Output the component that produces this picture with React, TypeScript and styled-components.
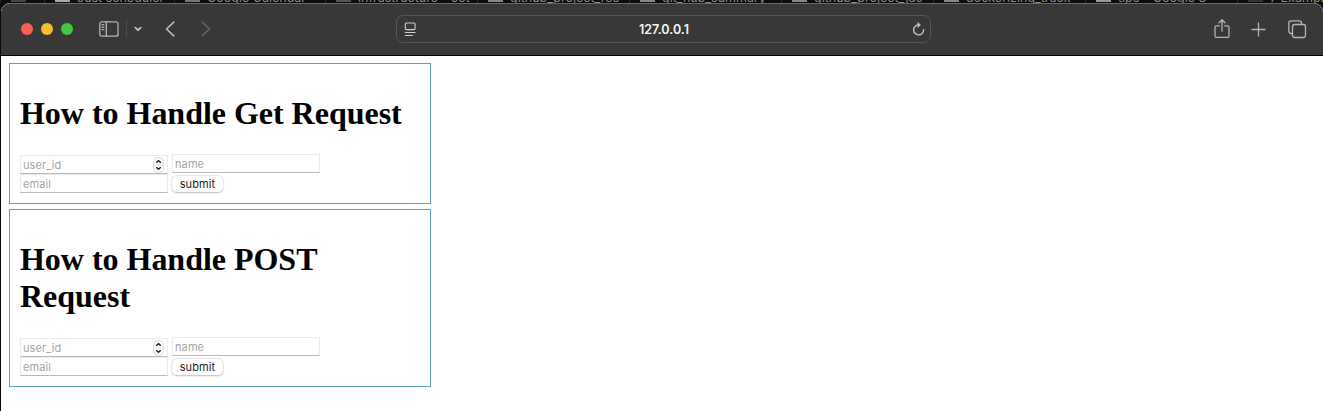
import React from 'react';
import styled, { createGlobalStyle } from 'styled-components';

const GlobalStyle = createGlobalStyle`
  * { box-sizing: border-box; }
  html, body { margin: 0; background: #fff; overflow: hidden; }
`;

const Screen = styled.div`
  width: 1323px;
  height: 411px;
  display: flex;
  flex-direction: column;
  background: #0b0b0b;
  overflow: hidden;
`;

const TabStrip = styled.div`
  height: 3px;
  flex: none;
  display: flex;
  align-items: flex-end;
  overflow: hidden;
  background: #0b0b0b;
  font: 12.5px/14px Inter, sans-serif;
  color: #8c8c8c;
  white-space: nowrap;
`;

const Tab = styled.div<{ $width: number }>`
  width: ${(p) => p.$width}px;
  height: 14px;
  flex: none;
  display: flex;
  gap: 7px;
  padding-left: 10px;
  border-left: 1px solid #2c2c2c;
`;

const TabLabel = styled.span`
  flex: none;
  margin-top: 2px;
`;

const Favicon = styled.i<{ $color: string }>`
  width: 15px;
  height: 13px;
  flex: none;
  background: ${(p) => p.$color};
`;

const Window = styled.div`
  flex: 1;
  display: flex;
  flex-direction: column;
  margin-left: 1px;
  border-radius: 9px 9px 0 0;
  overflow: hidden;
  background: #fff;
`;

const Toolbar = styled.header`
  height: 53px;
  flex: none;
  display: flex;
  align-items: center;
  padding: 0 16px 1px 20px;
  background: #383838;
  border-top: 1px solid #6a6a6a;
  border-bottom: 1px solid #000;
  border-radius: 9px 9px 0 0;
`;

const Side = styled.div<{ $end?: boolean }>`
  flex: ${(p) => (p.$end ? '1' : '0 0 375px')};
  display: flex;
  align-items: center;
  justify-content: ${(p) => (p.$end ? 'flex-end' : 'flex-start')};
`;

const Light = styled.span<{ $color: string }>`
  width: 12px;
  height: 12px;
  margin-right: 8px;
  border-radius: 50%;
  background: ${(p) => p.$color};
`;

const Glyph = styled.svg<{ $left?: number; $color?: string; $weight?: number }>`
  flex: none;
  margin-left: ${(p) => p.$left ?? 0}px;
  fill: none;
  stroke: ${(p) => p.$color ?? '#b4b4b4'};
  stroke-width: ${(p) => p.$weight ?? 1.3};
  stroke-linecap: round;
  stroke-linejoin: round;
`;

const Divider = styled.span`
  width: 1px;
  height: 18px;
  margin-left: 7px;
  background: #4b4b4b;
`;

const AddressBar = styled.div`
  width: 535px;
  height: 28px;
  flex: none;
  display: flex;
  align-items: center;
  padding: 0 5px 0 7px;
  border: 1px solid #555;
  border-radius: 7px;
`;

const Address = styled.span`
  flex: 1;
  padding-top: 1px;
  text-align: center;
  color: #f4f4f4;
  font: 600 12.5px/16px Inter, sans-serif;
`;

const Page = styled.main`
  flex: 1;
  display: flex;
  flex-direction: column;
  gap: 5px;
  padding: 7px 8px;
`;

const Card = styled.section<{ $height: number }>`
  width: 422px;
  height: ${(p) => p.$height}px;
  padding: 10px;
  border: 1px solid #5a9fc8;
`;

const Title = styled.h1`
  margin: 21px 0 22px;
  font: bold 32px/37px 'Liberation Serif', serif;
  letter-spacing: -0.02px;
  color: #000;
`;

const Form = styled.form`
  display: grid;
  grid-template-columns: 148px 148px;
  grid-template-rows: 20px 19px;
  column-gap: 4px;
  align-items: start;
`;

const Field = styled.label<{ $low?: boolean }>`
  height: 19px;
  display: flex;
  align-items: center;
  justify-content: space-between;
  margin-top: ${(p) => (p.$low ? 1 : 0)}px;
  padding: 0 3px 0 2px;
  border: 1px solid #ebebeb;
  border-bottom-color: #b9b9b9;
`;

const Input = styled.input`
  width: 100px;
  height: 17px;
  padding: 1px 0 0;
  border: 0;
  outline: 0;
  background: transparent;
  font: 11px/16px Inter, sans-serif;
  letter-spacing: 0.1px;
  &::placeholder { color: #a5a5a5; opacity: 1; }
`;

const Submit = styled.button`
  width: 51px;
  height: 16px;
  margin: 2px 0 0;
  padding: 0;
  border: 0;
  border-radius: 5px;
  background: #fff;
  box-shadow: 0 0 0 0.5px #dcdcdc, 0 0.5px 1.5px #aaa;
  color: #222;
  font: 11px/16px Inter, sans-serif;
  letter-spacing: 0.1px;
`;

const tabs = [
  { label: 'Just scheduler', width: 130, icon: '#a8a8a8' },
  { label: 'Google Calendar –', width: 151, icon: '#777' },
  { label: 'infrastructure – Jet', width: 152, icon: '#555' },
  { label: 'github_project_res', width: 152, icon: '#888' },
  { label: 'git_hub_summary', width: 152, icon: '#888' },
  { label: 'github_project_jac', width: 152, icon: '#888' },
  { label: 'dockerizing_track', width: 152, icon: '#888' },
  { label: 'tips – Google S', width: 152, icon: '#999' },
  { label: '7 Example', width: 90, icon: '#333' },
];

const Stepper = () => (
  <svg width="11" height="16" viewBox="0 0 11 16" fill="none">
    <rect x=".6" y=".6" width="9.8" height="14.6" rx="4" fill="#fff" stroke="#d8d8d8" />
    <path d="M.6 8h9.8" stroke="#dedede" />
    <path d="M3.2 5.6 5.5 3.6l2.3 2M3.2 10.2l2.3 2 2.3-2" stroke="#222" strokeWidth="1.4" />
  </svg>
);

function RequestCard({ title, height }: { title: string; height: number }) {
  return (
    <Card $height={height}>
      <Title>{title}</Title>
      <Form onSubmit={(e) => e.preventDefault()}>
        <Field $low>
          <Input placeholder="user_id" inputMode="numeric" />
          <Stepper />
        </Field>
        <Field><Input placeholder="name" /></Field>
        <Field><Input placeholder="email" /></Field>
        <Submit>submit</Submit>
      </Form>
    </Card>
  );
}

export default function App() {
  return (
    <>
      <GlobalStyle />
      <Screen>
        <TabStrip>
          <Tab $width={44}><Favicon $color="#444" /></Tab>
          {tabs.map((t) => (
            <Tab key={t.label} $width={t.width}>
              <Favicon $color={t.icon} />
              <TabLabel>{t.label}</TabLabel>
            </Tab>
          ))}
        </TabStrip>
        <Window>
          <Toolbar>
            <Side>
              <Light $color="#fb5f57" />
              <Light $color="#fbbc2e" />
              <Light $color="#42c840" />
              <Glyph $left={18} width="20" height="16" viewBox="0 0 20 16">
                <rect x=".8" y=".8" width="18.2" height="14.4" rx="2" />
                <path d="M7.3 1v14M3 3.7h1.8M3 6.2h1.8M3 8.7h1.8" />
              </Glyph>
              <Divider />
              <Glyph $left={7} $color="#d0d0d0" $weight={1.6} width="8" height="6" viewBox="0 0 8 6">
                <path d="m1.2 1.5 2.8 2.7 2.8-2.7" />
              </Glyph>
              <Glyph $left={23} $color="#bdbdbd" $weight={1.6} width="10" height="16" viewBox="0 0 10 16">
                <path d="M8.8 1.2 1.5 8l7.3 6.8" />
              </Glyph>
              <Glyph $left={26} $color="#646464" $weight={1.6} width="10" height="16" viewBox="0 0 10 16">
                <path d="M1.2 1.2 8.5 8l-7.3 6.8" />
              </Glyph>
            </Side>
            <AddressBar>
              <Glyph $color="#d0d0d0" $weight={1.1} width="12" height="15" viewBox="0 0 12 15">
                <rect x="1.3" y="1" width="9.8" height="6.6" rx="1.3" />
                <path d="M1.3 10.5h9.8M1.3 13.5h7" />
              </Glyph>
              <Address>127.0.0.1</Address>
              <Glyph $color="#c4c4c4" $weight={1.4} width="13" height="16" viewBox="0 0 13 16">
                <path d="M6.9 3.9A5 5 0 1 0 11.6 8.8" />
                <path d="M6 1.4 8.5 3.9 6 6.4Z" fill="#c4c4c4" strokeWidth=".5" />
              </Glyph>
            </AddressBar>
            <Side $end>
              <Glyph width="16" height="20" viewBox="0 0 16 20">
                <path d="M5.3 6.8H2.6A1.6 1.6 0 0 0 1 8.4v8.4a1.6 1.6 0 0 0 1.6 1.6h10.8a1.6 1.6 0 0 0 1.6-1.6V8.4a1.6 1.6 0 0 0-1.6-1.6h-2.7M8 12V1M5 3.7 8 .8l3 2.9" />
              </Glyph>
              <Glyph $left={21} width="15" height="15" viewBox="0 0 15 15">
                <path d="M7.5 1v13M1 7.5h13" />
              </Glyph>
              <Glyph $left={22} width="19" height="19" viewBox="0 0 19 19">
                <rect x="4.5" y="4.5" width="13" height="13" rx="2.2" />
                <path d="M4.3 13.5H3a2.2 2.2 0 0 1-2.2-2.2V3A2.2 2.2 0 0 1 3 .8h8.3A2.2 2.2 0 0 1 13.5 3v1.3" />
              </Glyph>
            </Side>
          </Toolbar>
          <Page>
            <RequestCard title="How to Handle Get Request" height={141} />
            <RequestCard title="How to Handle POST Request" height={178} />
          </Page>
        </Window>
      </Screen>
    </>
  );
}
